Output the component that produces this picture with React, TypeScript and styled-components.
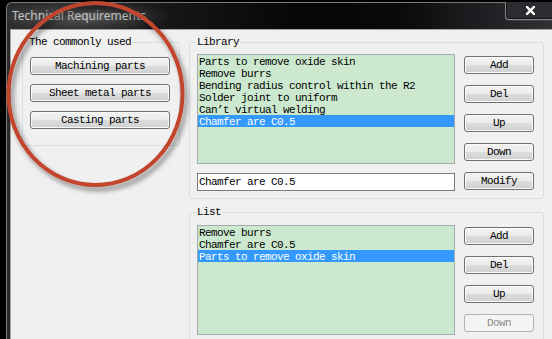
import React from 'react';
import styled, { createGlobalStyle } from 'styled-components';

const GlobalStyle = createGlobalStyle`
  html, body {
    margin: 0;
    padding: 0;
    background: #000;
  }
  body {
    width: 552px;
    height: 339px;
    overflow: hidden;
  }
`;

const libraryItems = [
  'Parts to remove oxide skin',
  'Remove burrs',
  'Bending radius control within the R2',
  'Solder joint to uniform',
  'Can’t virtual welding',
  'Chamfer are C0.5',
];

const listItems = ['Remove burrs', 'Chamfer are C0.5', 'Parts to remove oxide skin'];

const App = () => {
  return (
    <>
      <GlobalStyle />
      <Window>
        <Frame>
          <TitleBar>
            <Title>Technical Requirements</Title>
            <CloseButton>
              <svg width="9" height="9" viewBox="0 0 9 9">
                <path d="M1 1 L8 8 M8 1 L1 8" stroke="#fff" strokeWidth="2.4" strokeLinecap="square" />
              </svg>
            </CloseButton>
          </TitleBar>
          <Client>
            <Group $w={158} $h={110}>
              <Legend>The commonly used</Legend>
              <CommonBody>
                <PushButton $w={140}>Machining parts</PushButton>
                <PushButton $w={140}>Sheet metal parts</PushButton>
                <PushButton $w={140}>Casting parts</PushButton>
              </CommonBody>
            </Group>
            <RightColumn>
              <Group $w={355} $h={163}>
                <Legend $indent={6}>Library</Legend>
                <LibraryBody>
                  <ListBox>
                    {libraryItems.map((t, i) => (
                      <Item key={i} $selected={i === 5}>{t}</Item>
                    ))}
                  </ListBox>
                  <ButtonStack>
                    <PushButton $w={70}>Add</PushButton>
                    <PushButton $w={70}>Del</PushButton>
                    <PushButton $w={70}>Up</PushButton>
                    <PushButton $w={70}>Down</PushButton>
                  </ButtonStack>
                  <TextField defaultValue="Chamfer are C0.5" />
                  <PushButton $w={70}>Modify</PushButton>
                </LibraryBody>
              </Group>
              <Group $w={355} $h={160}>
                <Legend $indent={6}>List</Legend>
                <ListBody>
                  <ListBox>
                    {listItems.map((t, i) => (
                      <Item key={i} $selected={i === 2}>{t}</Item>
                    ))}
                  </ListBox>
                  <ButtonStack>
                    <PushButton $w={70}>Add</PushButton>
                    <PushButton $w={70}>Del</PushButton>
                    <PushButton $w={70}>Up</PushButton>
                    <PushButton $w={70} disabled>Down</PushButton>
                  </ButtonStack>
                </ListBody>
              </Group>
            </RightColumn>
          </Client>
        </Frame>
        <Overlay width="552" height="339" viewBox="0 0 552 339">
          <defs>
            <filter id="shade" x="-20%" y="-20%" width="140%" height="140%">
              <feDropShadow dx="3" dy="4" stdDeviation="2.5" floodColor="#000" floodOpacity="0.45" />
            </filter>
          </defs>
          <ellipse cx="95.5" cy="94" rx="87" ry="91" fill="none" stroke="#c2452d" strokeWidth="4" filter="url(#shade)" />
        </Overlay>
      </Window>
    </>
  );
};

const mono = `"Liberation Mono", "DejaVu Sans Mono", monospace`;

const Window = styled.div`
  position: relative;
  width: 552px;
  height: 339px;
  overflow: hidden;
  background: #000;
  padding: 2px 0 0 6px;
  box-sizing: border-box;
  font-family: ${mono};
`;

const Frame = styled.div`
  height: 100%;
  display: flex;
  flex-direction: column;
  border-top: 1px solid #7a7a7a;
  border-left: 1px solid #7a7a7a;
  border-top-left-radius: 6px;
  background:
    radial-gradient(ellipse 90px 18px at 75px 14px, rgba(120, 120, 120, 0.55), rgba(40, 40, 40, 0) 100%),
    linear-gradient(90deg, #2b2b2b 0%, #161616 30%, #060606 55%, #0a0a0b 72%, #2f3135 100%);
`;

const TitleBar = styled.div`
  height: 26px;
  flex-shrink: 0;
  display: flex;
  justify-content: space-between;
  align-items: flex-start;
  padding-left: 5px;
`;

const Title = styled.div`
  font-family: "Noto Sans", "Liberation Sans", sans-serif;
  font-size: 12px;
  line-height: 26px;
  color: #c4c4c4;
  text-shadow: 0 0 6px rgba(255, 255, 255, 0.2);
`;

const CloseButton = styled.div`
  width: 47px;
  height: 18px;
  margin-top: -1px;
  display: flex;
  align-items: center;
  justify-content: center;
  padding-left: 3px;
  box-sizing: border-box;
  border: 1px solid #858585;
  border-right: none;
  border-top: none;
  border-bottom-left-radius: 4px;
  background: #2a2c30;
  box-shadow: inset 0 -1px 0 #141414, inset 1px 0 0 #141414, 0 1px 0 #3d3f43;
`;

const Client = styled.div`
  flex: 1;
  margin-left: 3px;
  border-top: 1px solid #a3a3a3;
  border-left: 1px solid #a3a3a3;
  background: #f0f0f0;
  display: flex;
  align-items: flex-start;
  gap: 9px;
  padding: 6px 0 0 11px;
`;

const RightColumn = styled.div`
  width: 355px;
  flex-shrink: 0;
  display: flex;
  flex-direction: column;
  gap: 7px;
`;

const Group = styled.fieldset<{ $w: number; $h: number }>`
  margin: 0;
  padding: 0;
  min-width: 0;
  flex-shrink: 0;
  width: ${p => p.$w}px;
  height: ${p => p.$h}px;
  box-sizing: border-box;
  border: 1px solid #d5dfe5;
  border-radius: 3px;
`;

const Legend = styled.legend<{ $indent?: number }>`
  margin-left: ${p => p.$indent ?? 5}px;
  padding: 0 1px;
  font-family: ${mono};
  font-size: 11px;
  line-height: 12px;
  letter-spacing: -0.6px;
  color: #000;
`;

const CommonBody = styled.div`
  display: flex;
  flex-direction: column;
  gap: 9px;
  padding: 9px 0 0 7px;
`;

const LibraryBody = styled.div`
  display: grid;
  grid-template-columns: 258px 70px;
  column-gap: 9px;
  row-gap: 8px;
  padding: 6px 0 0 7px;
`;

const ListBody = styled.div`
  display: grid;
  grid-template-columns: 258px 70px;
  column-gap: 9px;
  padding: 7px 0 0 7px;
`;

const ButtonStack = styled.div`
  display: flex;
  flex-direction: column;
  gap: 11px;
  padding-top: 2px;
`;

const ListBox = styled.div`
  height: 110px;
  box-sizing: border-box;
  border: 1px solid #a5a8ad;
  background: #cce8cf;
  overflow: hidden;
`;

const Item = styled.div<{ $selected?: boolean }>`
  height: 12px;
  line-height: 14px;
  padding-left: 1px;
  font-size: 11px;
  letter-spacing: -0.6px;
  white-space: nowrap;
  color: ${p => (p.$selected ? '#fff' : '#000')};
  background: ${p => (p.$selected ? '#3399ff' : 'transparent')};
`;

const TextField = styled.input`
  width: 258px;
  height: 18px;
  margin: 1px 0 0;
  box-sizing: border-box;
  border: 1px solid #7a7a7a;
  background: #fff;
  padding: 0 1px;
  font-family: ${mono};
  font-size: 11px;
  letter-spacing: -0.6px;
  color: #000;
  outline: none;
`;

const PushButton = styled.button<{ $w: number }>`
  width: ${p => p.$w}px;
  height: 18px;
  padding: 0;
  box-sizing: border-box;
  border: 1px solid #707070;
  border-radius: 3px;
  background: linear-gradient(#f3f3f3 0%, #ebebeb 48%, #dddddd 52%, #cfcfcf 100%);
  box-shadow: inset 0 0 0 1px #fbfbfb;
  font-family: ${mono};
  font-size: 11px;
  line-height: 16px;
  letter-spacing: -0.6px;
  color: #000;

  &:disabled {
    border-color: #adb2b5;
    background: #f4f4f4;
    box-shadow: none;
    color: #8d8d8d;
  }
`;

const Overlay = styled.svg`
  position: absolute;
  left: 0;
  top: 0;
  pointer-events: none;
`;

export default App;
